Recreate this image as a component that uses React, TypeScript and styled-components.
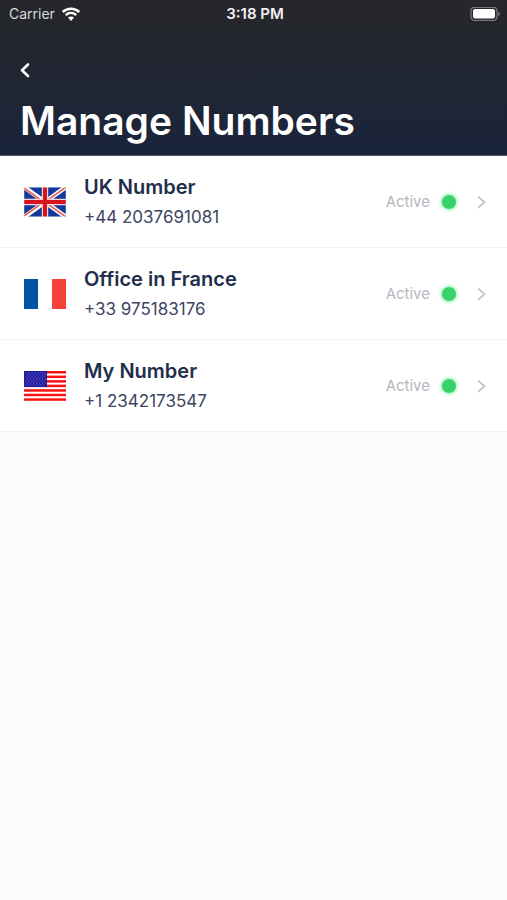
import React from "react";
import styled, { createGlobalStyle } from "styled-components";

const GlobalStyle = createGlobalStyle`
  * { box-sizing: border-box; }
  body {
    margin: 0;
    background: #fafbfd;
    font-family: Inter, "Liberation Sans", sans-serif;
    -webkit-font-smoothing: antialiased;
  }
`;

const Screen = styled.div`
  min-height: 100vh;
  background: #fafbfd;
`;

const Header = styled.header`
  height: 156px;
  background: linear-gradient(#26272a, #1a243b);
  border-bottom: 1px solid #555871;
  color: #fff;
`;

const StatusBar = styled.div`
  display: grid;
  grid-template-columns: 1fr auto 1fr;
  align-items: center;
  height: 28px;
  padding: 0 6px 0 9px;
  line-height: 20px;
`;

const Carrier = styled.div`
  display: flex;
  align-items: center;
  gap: 6px;
  font-size: 14px;
  color: #d9dadb;
`;

const Clock = styled.time`
  font-size: 15px;
  font-weight: 600;
  color: #f1f1f2;
`;

const BatteryIcon = styled.svg`
  justify-self: end;
`;

const BackButton = styled.button`
  display: flex;
  align-items: center;
  margin: 26px 0 0 12px;
  padding: 0 8px;
  height: 32px;
  border: 0;
  background: none;
  color: #fff;
  cursor: pointer;
`;

const Title = styled.h1`
  margin: 10px 20px 0;
  font-size: 39px;
  line-height: 50px;
  font-weight: 600;
  white-space: nowrap;
`;

const List = styled.ul`
  margin: 0;
  padding: 0;
  list-style: none;
`;

const Item = styled.li`
  border-bottom: 1px solid #f2f3f4;
  background: #fff;
`;

const RowLink = styled.a`
  display: flex;
  align-items: center;
  height: 91px;
  padding: 0 20px 0 23px;
  color: #222e4b;
  text-decoration: none;
`;

const Flag = styled.svg`
  flex: none;
  width: 44px;
  height: 30px;
`;

const Details = styled.div`
  flex: 1;
  min-width: 0;
  margin-left: 17px;
`;

const Name = styled.div`
  font-size: 20px;
  line-height: 30px;
  font-weight: 600;
`;

const Phone = styled.div`
  font-size: 17px;
  line-height: 30px;
  color: #3d4560;
`;

const Status = styled.span`
  font-size: 15px;
  line-height: 20px;
  color: #b4b7bf;
`;

const Dot = styled.span`
  width: 14px;
  height: 14px;
  margin: 0 20px 0 12px;
  border-radius: 50%;
  background: #38d16a;
  box-shadow: 0 0 3px 2px #b5f5c9;
`;

const UkFlag = () => (
  <Flag viewBox="0 0 44 30" aria-label="United Kingdom" role="img">
    <path d="M1 0h42v30H1z" fill="#12399b" />
    <path d="M1 0L43 30M43 0L1 30" stroke="#fff" strokeWidth="4.600" />
    <path d="M1 1L22 16M43 30L22 15" stroke="#e8645e" strokeWidth="1.700" />
    <path d="M43 0L22 15M1 29L22 14" stroke="#e8645e" strokeWidth="1.700" />
    <path d="M22 0v30M1 15h42" stroke="#f3d5dc" strokeWidth="6.400" />
    <path d="M22 0v30M1 15h42" stroke="#d6141d" strokeWidth="4" />
    <path d="M1 .5h42v29H1z" fill="none" stroke="#fff" strokeOpacity=".45" />
  </Flag>
);

const FranceFlag = () => (
  <Flag viewBox="0 0 44 30" aria-label="France" role="img">
    <path d="M0 0h44v30H0z" fill="#fff" />
    <path d="M1 0h14v30H1z" fill="#0053a5" />
    <path d="M29 0h14v30H29z" fill="#f44336" />
  </Flag>
);

const stripes = [0, 1, 2, 3, 4, 5, 6];
const starRows = [0, 1, 2, 3, 4, 5, 6];

const UsFlag = () => (
  <Flag viewBox="0 0 44 30" aria-label="United States" role="img">
    <path d="M0 0h44v30H0z" fill="#fff" />
    {stripes.map((n) => (
      <rect key={n} x="1" y={n * 4.55} width="42" height="2.5" fill="#fb1212" />
    ))}
    <path d="M1 0h23v16H1z" fill="#211ca0" />
    {starRows.map((n) => (
      <path
        key={n}
        d={`M${n % 2 ? 4 : 2.5} ${2 + n * 2}H23`}
        stroke="#7471c8"
        strokeWidth="1"
        strokeDasharray="1 2"
      />
    ))}
  </Flag>
);

const numbers = [
  { name: "UK Number", phone: "+44 2037691081", flag: <UkFlag /> },
  { name: "Office in France", phone: "+33 975183176", flag: <FranceFlag /> },
  { name: "My Number", phone: "+1 2342173547", flag: <UsFlag /> },
];

export default function App() {
  return (
    <Screen>
      <GlobalStyle />
      <Header>
        <StatusBar>
          <Carrier>
            Carrier
            <svg width="20" height="15" viewBox="0 0 20 15" fill="none" aria-hidden="true">
              <path d="M1.700 5C6.400 .5 13.600 .5 18.300 5" stroke="#fff" strokeWidth="2.500" />
              <path d="M4.700 8.200C7.800 5.300 12.200 5.300 15.300 8.200" stroke="#fff" strokeWidth="2.400" />
              <path d="M7 10.600C8.800 9.200 11.200 9.200 13 10.600L10 14Z" fill="#fff" />
            </svg>
          </Carrier>
          <Clock>3:18 PM</Clock>
          <BatteryIcon width="31" height="15" viewBox="0 0 31 15" aria-hidden="true">
            <rect x="1" y=".3" width="26" height="13" rx="3.500" fill="none" stroke="#77787b" strokeWidth="1.300" />
            <rect x="3" y="2.100" width="22" height="9.400" rx="2" fill="#fff" />
            <path d="M28.300 4.700C30.500 5.200 30.500 8.500 28.300 9Z" fill="#77787b" />
          </BatteryIcon>
        </StatusBar>
        <BackButton aria-label="Back">
          <svg width="10" height="16" viewBox="0 0 10 16" fill="none" aria-hidden="true">
            <path d="M8 2.500L2 8.300L8 14" stroke="currentColor" strokeWidth="2.600" strokeLinecap="round" strokeLinejoin="round" />
          </svg>
        </BackButton>
        <Title>Manage Numbers</Title>
      </Header>
      <List>
        {numbers.map((item) => (
          <Item key={item.name}>
            <RowLink href="#">
              {item.flag}
              <Details>
                <Name>{item.name}</Name>
                <Phone>{item.phone}</Phone>
              </Details>
              <Status>Active</Status>
              <Dot />
              <svg width="11" height="14" viewBox="0 0 11 14" fill="none" aria-hidden="true">
                <path d="M2 1.500L8.500 7.200L2 12.900" stroke="#c2c4ca" strokeWidth="1.700" />
              </svg>
            </RowLink>
          </Item>
        ))}
      </List>
    </Screen>
  );
}
